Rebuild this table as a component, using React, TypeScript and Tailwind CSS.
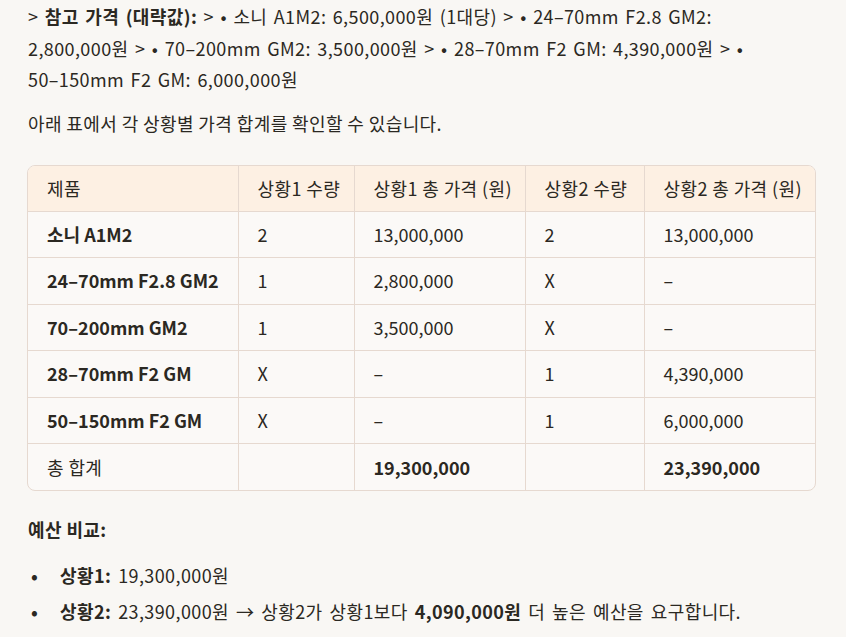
import React from "react";

type Row = {
    name: string;
    q1: string;
    p1: string;
    q2: string;
    p2: string;
};

const rows: Row[] = [
    { name: "소니 A1M2", q1: "2", p1: "13,000,000", q2: "2", p2: "13,000,000" },
    { name: "24–70mm F2.8 GM2", q1: "1", p1: "2,800,000", q2: "X", p2: "–" },
    { name: "70–200mm GM2", q1: "1", p1: "3,500,000", q2: "X", p2: "–" },
    { name: "28–70mm F2 GM", q1: "X", p1: "–", q2: "1", p2: "4,390,000" },
    { name: "50–150mm F2 GM", q1: "X", p1: "–", q2: "1", p2: "6,000,000" },
];

const headers = ["제품", "상황1 수량", "상황1 총 가격 (원)", "상황2 수량", "상황2 총 가격 (원)"];

const cell = "pl-[19px] pr-2 text-left align-middle border-[#e6d9d0] whitespace-nowrap";

const App = () => {
    return (
        <div
            className="min-h-[637px] w-full bg-[#f9f7f4] text-[#2b2822] px-[28px] pt-px text-[18px] tracking-[0.4px]"
            style={{ fontFamily: '"Noto Sans CJK KR", "Noto Sans", sans-serif' }}
        >
            <p className="leading-[31.5px] [word-spacing:2px]">
                &gt; <b className="font-bold">참고 가격 (대략값):</b> &gt; • 소니 A1M2: 6,500,000원 (1대당) &gt; • 24–70mm F2.8 GM2:
                <br />
                2,800,000원 &gt; • 70–200mm GM2: 3,500,000원 &gt; • 28–70mm F2 GM: 4,390,000원 &gt; •
                <br />
                50–150mm F2 GM: 6,000,000원
            </p>
            <p className="mt-[12px] leading-[31.5px]">아래 표에서 각 상황별 가격 합계를 확인할 수 있습니다.</p>

            <div className="mt-[26px] -ml-px w-[789px] overflow-hidden rounded-lg border border-[#e6d9d0] bg-[#fbf9f7]">
                <table className="w-full border-collapse">
                    <colgroup>
                        <col className="w-[210px]" />
                        <col className="w-[116px]" />
                        <col className="w-[171px]" />
                        <col className="w-[119px]" />
                        <col />
                    </colgroup>
                    <thead>
                        <tr className="h-[45px] bg-[#fdf0e3]">
                            {headers.map((h, i) => (
                                <th key={h} className={`${cell} font-normal ${i > 0 ? "border-l" : ""}`}>
                                    {h}
                                </th>
                            ))}
                        </tr>
                    </thead>
                    <tbody>
                        {rows.map((r) => (
                            <tr key={r.name} className="h-[46.5px] border-t border-[#e6d9d0]">
                                <td className={`${cell} font-bold tracking-normal`}>{r.name}</td>
                                <td className={`${cell} border-l`}>{r.q1}</td>
                                <td className={`${cell} border-l tracking-normal`}>{r.p1}</td>
                                <td className={`${cell} border-l`}>{r.q2}</td>
                                <td className={`${cell} border-l tracking-normal`}>{r.p2}</td>
                            </tr>
                        ))}
                        <tr className="h-[46.5px] border-t border-[#e6d9d0]">
                            <td className={cell}>총 합계</td>
                            <td className={`${cell} border-l`}></td>
                            <td className={`${cell} border-l font-bold tracking-normal`}>19,300,000</td>
                            <td className={`${cell} border-l`}></td>
                            <td className={`${cell} border-l font-bold tracking-normal`}>23,390,000</td>
                        </tr>
                    </tbody>
                </table>
            </div>

            <p className="mt-[23px] font-bold leading-[31.5px]">예산 비교:</p>
            <ul className="mt-[14px] flex flex-col gap-[4.5px] leading-[31.5px] [word-spacing:2.5px]">
                <li className="flex items-start">
                    <span className="w-[32px] pl-[3px] font-bold">•</span>
                    <span>
                        <b className="font-bold">상황1:</b> 19,300,000원
                    </span>
                </li>
                <li className="flex items-start">
                    <span className="w-[32px] pl-[3px] font-bold">•</span>
                    <span>
                        <b className="font-bold">상황2:</b> 23,390,000원 → 상황2가 상황1보다 <b className="font-bold">4,090,000원</b> 더 높은
                        예산을 요구합니다.
                    </span>
                </li>
            </ul>
        </div>
    );
};

export default App;
